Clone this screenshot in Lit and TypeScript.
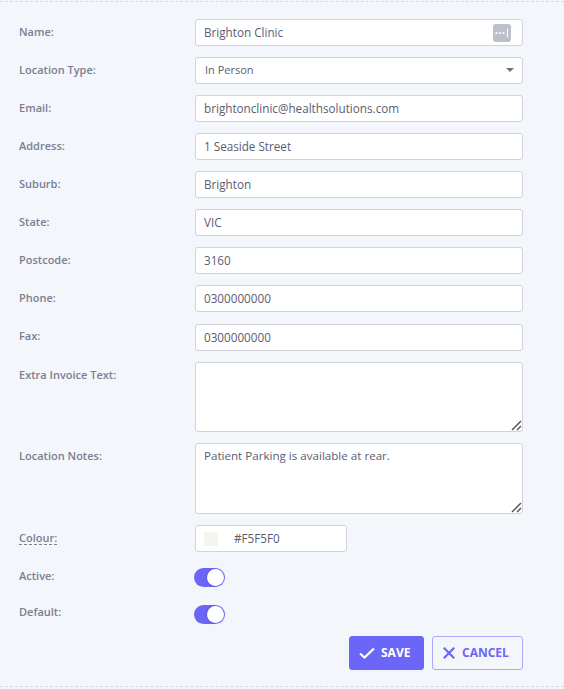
import { LitElement, html, css } from "lit";
import { customElement } from "lit/decorators.js";

const fields: [string, string][] = [
  ["Email:", "brightonclinic@healthsolutions.com"],
  ["Address:", "1 Seaside Street"],
  ["Suburb:", "Brighton"],
  ["State:", "VIC"],
  ["Postcode:", "3160"],
  ["Phone:", "0300000000"],
];

@customElement("app-root")
export class AppRoot extends LitElement {
  static styles = css`
    :host {
      display: block;
      width: 564px;
      height: 689px;
      box-sizing: border-box;
      overflow: hidden;
      background: #f3f6fb;
      font-family: "Open Sans", "Noto Sans", sans-serif;
      color: #5b5d70;
    }
    .form {
      box-sizing: border-box;
      height: 686px;
      margin: 1px 0 2px;
      padding: 17px 41px 0 19px;
      border-top: 1px dashed #d5dbe6;
      border-bottom: 1px dashed #d5dbe6;
      display: flex;
      flex-direction: column;
      gap: 11px;
    }
    .row {
      display: grid;
      grid-template-columns: 176px 328px;
      align-items: start;
    }
    .fax { margin-top: 1px; }
    .label {
      font-size: 11px;
      font-weight: 600;
      line-height: 15px;
      padding-top: 5px;
      color: #7c7e92;
    }
    .raised { padding-top: 4px; }
    .hint {
      border-bottom: 1px dashed #7c7e92;
      display: inline-block;
      line-height: 13px;
    }
    .field {
      box-sizing: border-box;
      height: 27px;
      width: 100%;
      border: 1px solid #d2d3da;
      border-radius: 3px;
      background: #fff;
      padding: 0 8px;
      font: 400 11.7px/25px "Open Sans", "Noto Sans", sans-serif;
      color: #5b5d70;
      display: flex;
      align-items: center;
      justify-content: space-between;
      outline: none;
    }
    .select {
      padding-left: 9px;
      font-size: 11px;
      line-height: 23px;
      align-items: flex-start;
    }
    .select .caret { margin-top: 10px; }
    .dots {
      width: 18px;
      height: 18px;
      margin-right: 3px;
    }
    .caret {
      width: 0;
      height: 0;
      border-left: 4px solid transparent;
      border-right: 4px solid transparent;
      border-top: 4px solid #6c6e80;
    }
    .area {
      position: relative;
      height: 70px;
    }
    .area.tall { height: 71px; }
    textarea.field {
      display: block;
      height: 100%;
      padding: 3px 8px;
      font-size: 11.6px;
      line-height: 17px;
      resize: none;
    }
    .grip {
      position: absolute;
      right: 1px;
      bottom: 1px;
      width: 11px;
      height: 11px;
    }
    .colour {
      width: 152px;
      justify-content: flex-start;
      gap: 16px;
    }
    .swatch {
      width: 14px;
      height: 14px;
      background: #f5f5f0;
      flex: none;
    }
    .toggle-row { height: 25px; }
    .toggle-row + .toggle-row { margin-top: 1px; }
    .toggle {
      box-sizing: border-box;
      margin: 5px 0 0 -1px;
      width: 31px;
      height: 19px;
      border-radius: 10px;
      background: #6c66f8;
      position: relative;
    }
    .knob {
      position: absolute;
      right: 1px;
      top: 1px;
      width: 17px;
      height: 17px;
      border-radius: 50%;
      background: #fff;
      box-shadow: -1px 0 2px rgba(60, 55, 160, 0.35);
    }
    .actions {
      display: flex;
      justify-content: flex-end;
      gap: 8px;
    }
    .btn {
      box-sizing: border-box;
      height: 34px;
      border-radius: 3px;
      font: 700 12px/1 "Open Sans", "Noto Sans", sans-serif;
      display: flex;
      align-items: center;
      border: 1px solid #6c66f8;
      padding: 0;
    }
    .save {
      width: 75px;
      background: #6c66f8;
      color: #fff;
      padding-left: 9px;
      gap: 6px;
    }
    .cancel {
      width: 91px;
      background: transparent;
      color: #6c66f8;
      border-color: #aaa8fb;
      padding-left: 10px;
      gap: 7px;
    }
    svg { display: block; flex: none; }
  `;

  private grip() {
    return html`<svg class="grip" viewBox="0 0 11 11" fill="none" stroke="#55565f" stroke-width="1.5">
      <path d="M1 10 L10 1 M6 10 L10 6" />
    </svg>`;
  }

  render() {
    return html`
      <div class="form">
        <div class="row">
          <div class="label">Name:</div>
          <div class="field">
            <span>Brighton Clinic</span>
            <svg class="dots" viewBox="0 0 18 18">
              <rect width="18" height="18" rx="3" fill="#bcc0cb" />
              <circle cx="3.5" cy="9" r="1.1" fill="#fff" />
              <circle cx="7" cy="9" r="1.1" fill="#fff" />
              <circle cx="10.5" cy="9" r="1.1" fill="#fff" />
              <rect x="14" y="4.5" width="1" height="9" fill="#fff" />
            </svg>
          </div>
        </div>
        <div class="row">
          <div class="label">Location Type:</div>
          <div class="field select"><span>In Person</span><span class="caret"></span></div>
        </div>
        ${fields.map(
          ([l, v]) => html`
            <div class="row">
              <div class="label">${l}</div>
              <div class="field"><span>${v}</span></div>
            </div>
          `
        )}
        <div class="row fax">
          <div class="label raised">Fax:</div>
          <div class="field"><span>0300000000</span></div>
        </div>
        <div class="row">
          <div class="label">Extra Invoice Text:</div>
          <div class="area"><textarea class="field"></textarea>${this.grip()}</div>
        </div>
        <div class="row">
          <div class="label">Location Notes:</div>
          <div class="area tall">
            <textarea class="field">Patient Parking is available at rear.</textarea>${this.grip()}
          </div>
        </div>
        <div class="row">
          <div class="label"><span class="hint">Colour:</span></div>
          <div class="field colour"><span class="swatch"></span><span>#F5F5F0</span></div>
        </div>
        <div class="row toggle-row">
          <div class="label">Active:</div>
          <div class="toggle"><span class="knob"></span></div>
        </div>
        <div class="row toggle-row">
          <div class="label raised">Default:</div>
          <div class="toggle"><span class="knob"></span></div>
        </div>
        <div class="actions">
          <div class="btn save">
            <svg width="16" height="12" viewBox="0 0 16 12" fill="none" stroke="#fff" stroke-width="2.2">
              <path d="M1 6.5 L5.5 10.5 L15 1.5" />
            </svg>
            <span>SAVE</span>
          </div>
          <div class="btn cancel">
            <svg width="12" height="12" viewBox="0 0 12 12" fill="none" stroke="#6c66f8" stroke-width="2.2">
              <path d="M0.8 0.8 L11.2 11.2 M11.2 0.8 L0.8 11.2" />
            </svg>
            <span>CANCEL</span>
          </div>
        </div>
      </div>
    `;
  }
}
